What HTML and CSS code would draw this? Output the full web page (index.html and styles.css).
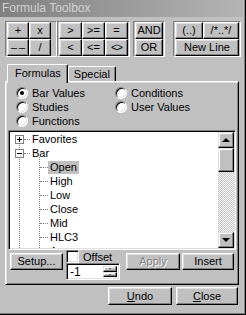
FILE: index.html
```html
<!DOCTYPE html>
<html lang="en">
<head>
    <meta charset="UTF-8">
    <title>Formula Toolbox</title>
    <link rel="stylesheet" href="styles.css">
</head>
<body>
    <div class="window">
        <div class="titlebar">Formula Toolbox</div>

        <div class="toolbar">
            <div class="group arith">
                <button class="btn">+</button>
                <button class="btn">x</button>
                <button class="btn dash">&#8211;&#8211;</button>
                <button class="btn">/</button>
            </div>
            <div class="group compare">
                <button class="btn">&gt;</button>
                <button class="btn">&gt;=</button>
                <button class="btn">=</button>
                <button class="btn">&lt;</button>
                <button class="btn">&lt;=</button>
                <button class="btn ne">&lt;&gt;</button>
            </div>
            <div class="group logic">
                <button class="btn">AND</button>
                <button class="btn">OR</button>
            </div>
            <div class="group misc">
                <button class="btn">(..)</button>
                <button class="btn">/*..*/</button>
                <button class="btn wide">New Line</button>
            </div>
        </div>

        <div class="tabs">
            <div class="tab active">Formulas</div>
            <div class="tab">Special</div>
        </div>

        <div class="panel">
            <div class="radios">
                <div class="radio-item"><span class="radio checked"></span>Bar Values</div>
                <div class="radio-item"><span class="radio"></span>Conditions</div>
                <div class="radio-item"><span class="radio"></span>Studies</div>
                <div class="radio-item"><span class="radio"></span>User Values</div>
                <div class="radio-item"><span class="radio"></span>Functions</div>
            </div>

            <div class="tree">
                <div class="tree-list">
                    <div class="node root"><span class="box plus"></span><span class="hline"></span><span class="label">Favorites</span></div>
                    <div class="node root"><span class="box"></span><span class="hline"></span><span class="label">Bar</span></div>
                    <div class="children">
                        <div class="node child"><span class="hline"></span><span class="label selected">Open</span></div>
                        <div class="node child"><span class="hline"></span><span class="label">High</span></div>
                        <div class="node child"><span class="hline"></span><span class="label">Low</span></div>
                        <div class="node child"><span class="hline"></span><span class="label">Close</span></div>
                        <div class="node child"><span class="hline"></span><span class="label">Mid</span></div>
                        <div class="node child"><span class="hline"></span><span class="label">HLC3</span></div>
                        <div class="node child"><span class="hline"></span><span class="label">Avg</span></div>
                    </div>
                </div>
                <div class="scrollbar">
                    <div class="sb-btn up"></div>
                    <div class="sb-thumb"></div>
                    <div class="sb-track"></div>
                    <div class="sb-btn down"></div>
                </div>
            </div>

            <div class="actions">
                <button class="btn setup">Setup...</button>
                <div class="offset">
                    <div class="offset-check"><span class="check"></span>Offset</div>
                    <div class="spin">
                        <span class="spin-value">-1</span>
                        <span class="spin-buttons">
                            <span class="spin-btn up"></span>
                            <span class="spin-btn down"></span>
                        </span>
                    </div>
                </div>
                <button class="btn apply disabled">Apply</button>
                <button class="btn insert">Insert</button>
            </div>
        </div>

        <div class="footer">
            <button class="btn undo"><u>U</u>ndo</button>
            <button class="btn close"><u>C</u>lose</button>
        </div>
    </div>
</body>
</html>
```

FILE: styles.css
```css
*{
    margin: 0;
    padding: 0;
    box-sizing: border-box;
}

body{
    width: 246px;
    height: 315px;
    overflow: hidden;
    background-color: #c0c0c0;
    font-family: "Liberation Sans", Arial, sans-serif;
    font-size: 11px;
    color: #000;
}

.window{
    width: 246px;
    height: 315px;
    display: flex;
    flex-direction: column;
    border-right: 1px solid #000;
    border-bottom: 1px solid #000;
    box-shadow: inset -1px -1px #808080;
}

.titlebar{
    height: 17px;
    margin-right: 2px;
    padding-left: 2px;
    line-height: 17px;
    font-size: 12px;
    color: #d0d0d0;
    background: linear-gradient(90deg, #808080, #b4b4b4);
}

/* buttons */
.btn{
    font: inherit;
    color: #000;
    background-color: #c0c0c0;
    border: 1px solid;
    border-color: #fff #000 #000 #fff;
    box-shadow: inset -1px -1px #808080, inset 1px 1px #dfdfdf;
    padding: 0;
    line-height: 13px;
    text-align: center;
}

.btn.disabled{
    color: #808080;
    text-shadow: 1px 1px #fff;
}

.btn u{
    text-decoration: underline;
}

/* toolbar */
.toolbar{
    display: flex;
    margin: 4px 0 0 5px;
}

.group{
    display: grid;
    grid-auto-rows: 17px;
    padding: 0 1px;
    border: 1px solid;
    border-color: #808080 #fff #fff #808080;
}

.group.arith{
    grid-template-columns: 22px 22px;
    padding-right: 5px;
}

.group.compare{
    grid-template-columns: 23px 23px 23px;
}

.group.logic{
    grid-template-columns: 28px;
    margin-left: 3px;
}

.group.misc{
    grid-template-columns: 28px 36px;
    margin-left: 8px;
}

.group .wide{
    grid-column: span 2;
}

.btn.dash{
    letter-spacing: 2px;
    padding-left: 2px;
}

.btn.ne{
    letter-spacing: -1px;
}

/* tabs */
.tabs{
    display: flex;
    align-items: flex-end;
    margin: 7px 0 -2px 7px;
    position: relative;
    z-index: 1;
}

.tab{
    height: 15px;
    margin-bottom: 2px;
    padding: 1px 5px 0;
    line-height: 13px;
    background-color: #c0c0c0;
    border: 1px solid;
    border-bottom: none;
    border-color: #fff #000 #000 #fff;
    border-radius: 2px 2px 0 0;
    box-shadow: inset -1px 0 #808080;
}

.tab.active{
    height: 19px;
    margin-bottom: 0;
    padding: 2px 6px 3px 7px;
}

/* panel */
.panel{
    margin-left: 5px;
    width: 234px;
    height: 204px;
    padding: 4px 2px 0 2px;
    border: 1px solid;
    border-color: #fff #000 #000 #fff;
    box-shadow: inset 1px 1px #dfdfdf, inset -1px -1px #808080;
}

.radios{
    display: grid;
    grid-template-columns: 99px auto;
    grid-auto-rows: 14px;
    margin-left: 8px;
}

.radio-item{
    display: flex;
    align-items: center;
    gap: 4px;
}

.radio{
    position: relative;
    width: 12px;
    height: 12px;
    border-radius: 50%;
    background-color: #fff;
    border: 1px solid;
    border-color: #808080 #fff #fff #808080;
    box-shadow: inset 1px 1px #000, inset -1px -1px #dfdfdf;
}

.radio.checked::after{
    content: "";
    position: absolute;
    left: 3px;
    top: 3px;
    width: 4px;
    height: 4px;
    border-radius: 50%;
    background-color: #000;
}

/* tree */
.tree{
    display: flex;
    height: 120px;
    margin-top: 2px;
    padding: 1px;
    background-color: #fff;
    border: 1px solid;
    border-color: #808080 #fff #fff #808080;
    box-shadow: inset 1px 1px #000, inset -1px -1px #dfdfdf;
}

.tree-list{
    flex: 1;
    position: relative;
    overflow: hidden;
}

.tree-list::before{
    content: "";
    position: absolute;
    left: 9px;
    top: 7px;
    bottom: 0;
    border-left: 1px dotted #808080;
}

.node{
    display: flex;
    align-items: center;
    height: 14px;
}

.node.root{
    padding-left: 5px;
}

.node.child{
    padding-left: 30px;
}

.box{
    position: relative;
    width: 9px;
    height: 9px;
    border: 1px solid #808080;
    background-color: #fff;
}

.box::before{
    content: "";
    position: absolute;
    left: 1px;
    top: 3px;
    width: 5px;
    height: 1px;
    background-color: #000;
}

.box.plus::after{
    content: "";
    position: absolute;
    left: 3px;
    top: 1px;
    width: 1px;
    height: 5px;
    background-color: #000;
}

.hline{
    width: 6px;
    border-top: 1px dotted #808080;
}

.child .hline{
    width: 8px;
}

.label{
    padding: 0 2px;
    line-height: 13px;
}

.label.selected{
    background-color: #c0c0c0;
}

.children{
    position: relative;
}

.children::before{
    content: "";
    position: absolute;
    left: 29px;
    top: -3px;
    bottom: 0;
    border-left: 1px dotted #808080;
}

/* scrollbar */
.scrollbar{
    width: 16px;
    display: flex;
    flex-direction: column;
}

.sb-btn, .sb-thumb, .spin-btn{
    background-color: #c0c0c0;
    border: 1px solid;
    border-color: #dfdfdf #000 #000 #dfdfdf;
    box-shadow: inset -1px -1px #808080, inset 1px 1px #fff;
}

.sb-btn{
    height: 16px;
    display: flex;
    align-items: center;
    justify-content: center;
}

.sb-btn::after{
    content: "";
    border-left: 4px solid transparent;
    border-right: 4px solid transparent;
}

.sb-btn.up::after{
    border-bottom: 4px solid #000;
}

.sb-btn.down::after{
    border-top: 4px solid #000;
}

.sb-thumb{
    height: 24px;
}

.sb-track{
    flex: 1;
    background: repeating-conic-gradient(#c0c0c0 0 25%, #fff 0 50%) 0 0 / 2px 2px;
}

/* bottom of panel */
.actions{
    display: flex;
    align-items: flex-start;
    margin-left: 2px;
}

.setup{
    width: 53px;
    height: 17px;
    margin-top: 3px;
}

.offset{
    margin-left: 3px;
}

.offset-check{
    display: flex;
    align-items: center;
    gap: 4px;
    height: 13px;
}

.check{
    width: 13px;
    height: 13px;
    background-color: #fff;
    border: 1px solid;
    border-color: #808080 #fff #fff #808080;
    box-shadow: inset 1px 1px #000, inset -1px -1px #dfdfdf;
}

.spin{
    display: flex;
    width: 54px;
    height: 17px;
    padding: 2px;
    background-color: #fff;
    border: 1px solid;
    border-color: #808080 #fff #fff #808080;
    box-shadow: inset 1px 1px #000, inset -1px -1px #dfdfdf;
}

.spin-value{
    flex: 1;
    padding-left: 1px;
    line-height: 13px;
    font-size: 12px;
}

.spin-buttons{
    width: 14px;
    display: flex;
    flex-direction: column;
}

.spin-btn{
    flex: 1;
    display: flex;
    align-items: center;
    justify-content: center;
}

.spin-btn::after{
    content: "";
    border-left: 1px solid transparent;
    border-right: 1px solid transparent;
}

.spin-btn.up::after{
    border-bottom: 1px solid #000;
}

.spin-btn.down::after{
    border-top: 1px solid #000;
}

.apply{
    width: 54px;
    height: 17px;
    margin: 3px 0 0 6px;
}

.insert{
    width: 52px;
    height: 17px;
    margin: 3px 0 0 2px;
}

/* footer */
.footer{
    display: flex;
    justify-content: flex-end;
    gap: 4px;
    margin: 2px 7px 0 0;
}

.footer .btn{
    height: 18px;
}

.undo{
    width: 64px;
}

.close{
    width: 62px;
}
```
